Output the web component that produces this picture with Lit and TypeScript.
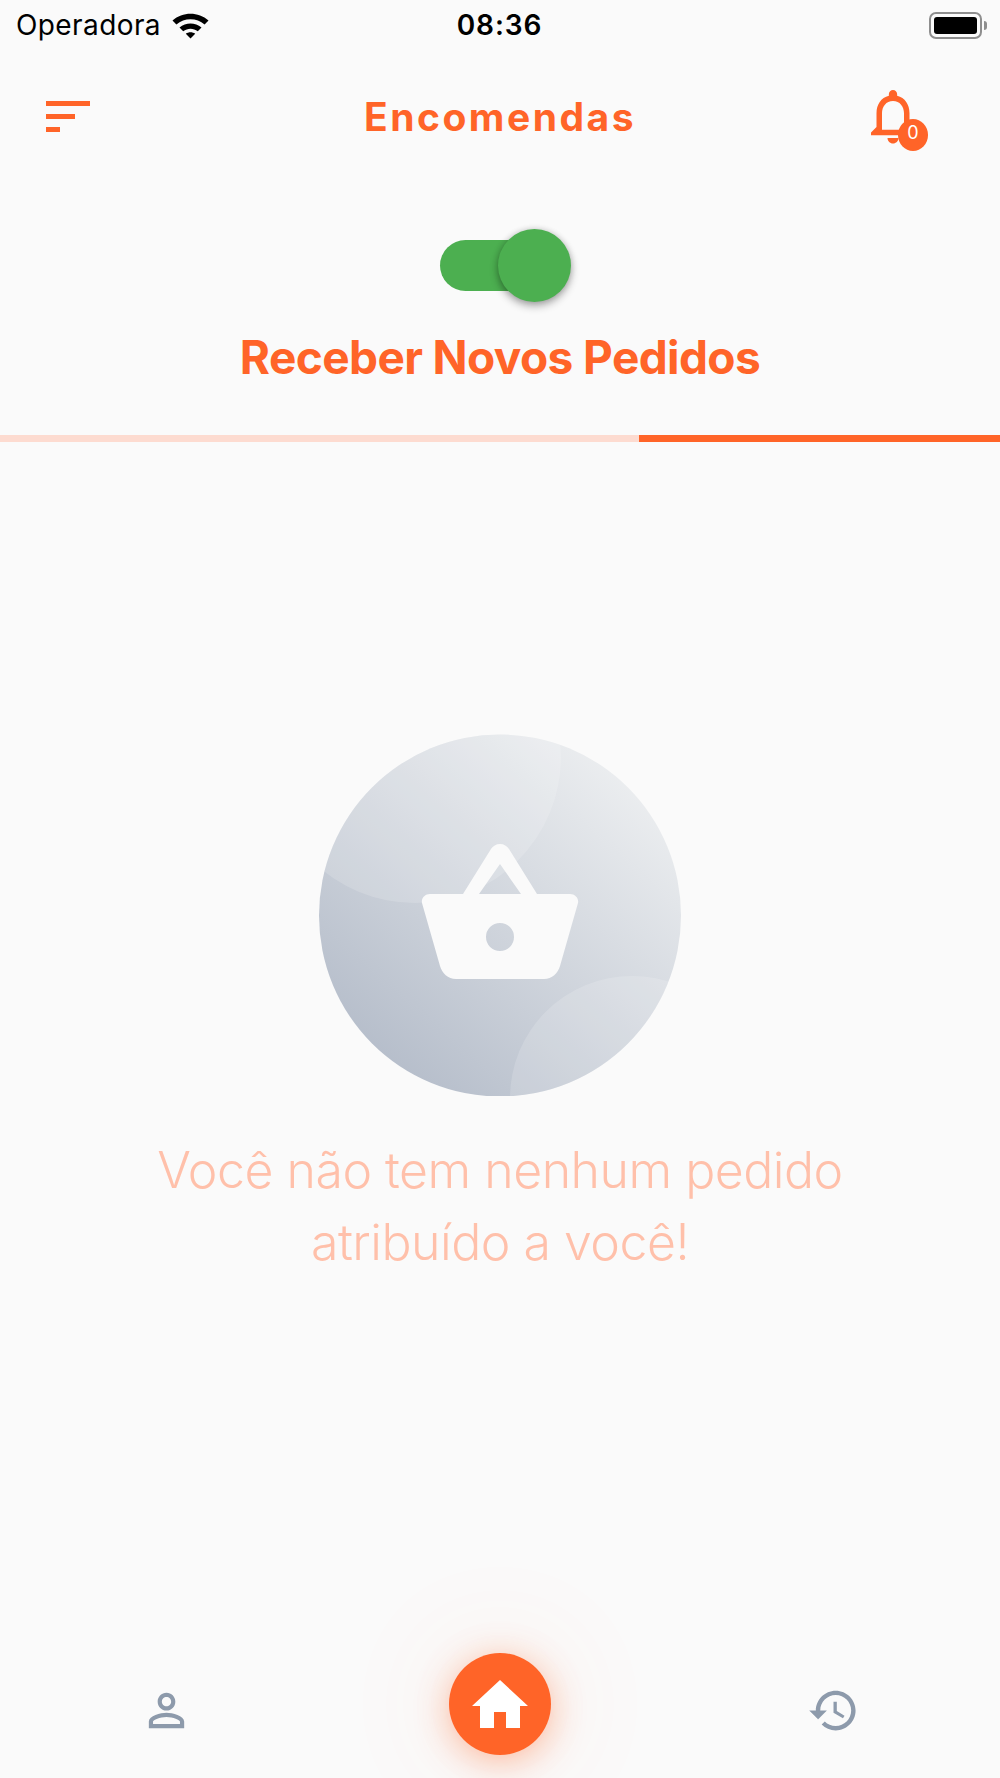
import { LitElement, html, css, svg } from 'lit';
import { customElement, state } from 'lit/decorators.js';

const BASKET =
  'M500 844c4 0 7 2 9 5l28 45h33c5 0 9 4 8 9l-18 63c-2 7-8 13-16 13H456c-8 0-14-6-16-13l-18-63c-1-5 3-9 8-9h33l28-45c2-3 5-5 9-5z' +
  'M500 864l-21 30h42z' +
  'M500 923a14 14 0 1 0 0 28a14 14 0 1 0 0-28z';

const PERSON =
  'M12 5.9c1.16 0 2.1.94 2.1 2.1s-.94 2.1-2.1 2.1S9.9 9.16 9.9 8s.94-2.1 2.1-2.1m0 9c2.97 0 6.1 1.46 6.1 2.1v1.1H5.9V17c0-.64 3.13-2.1 6.1-2.1M12 4C9.79 4 8 5.79 8 8s1.79 4 4 4 4-1.79 4-4-1.79-4-4-4zm0 9c-2.67 0-8 1.34-8 4v3h16v-3c0-2.66-5.33-4-8-4z';
const HISTORY =
  'M13 3c-4.97 0-9 4.03-9 9H1l3.89 3.89.07.14L9 12H6c0-3.87 3.13-7 7-7s7 3.13 7 7-3.13 7-7 7c-1.93 0-3.68-.79-4.94-2.06l-1.42 1.42C8.27 19.99 10.51 21 13 21c4.97 0 9-4.03 9-9s-4.03-9-9-9zm-1 5v5l4.28 2.54.72-1.21-3.5-2.08V8H12z';
const BELL =
  'M12 22c1.1 0 2-.9 2-2h-4c0 1.1.9 2 2 2zm6-6v-5c0-3.07-1.63-5.64-4.5-6.32V4c0-.83-.67-1.5-1.5-1.5s-1.5.67-1.5 1.5v.68C7.64 5.36 6 7.92 6 11v5l-2 2v1h16v-1l-2-2zm-2 1H8v-6c0-2.48 1.51-4.5 4-4.5s4 2.02 4 4.5v6z';

@customElement('app-root')
export class AppRoot extends LitElement {
  static styles = css`
    :host {
      display: block;
      --orange: #ff6428;
      font-family: Inter, 'Noto Sans', sans-serif;
    }

    .page {
      display: flex;
      flex-direction: column;
      height: 1778px;
      background: #fafafa;
      overflow: hidden;
    }

    /* status bar */
    .status {
      display: grid;
      grid-template-columns: 1fr auto 1fr;
      align-items: center;
      height: 50px;
      padding: 0 13px 0 16px;
      font-size: 28px;
      color: #000;
    }
    .status-left {
      display: flex;
      align-items: center;
      gap: 11px;
      letter-spacing: 0.4px;
    }
    .time {
      margin-right: 4px;
      font-weight: 600;
      letter-spacing: 0.9px;
    }
    .battery {
      justify-self: end;
      display: flex;
      align-items: center;
      gap: 2px;
    }
    .battery-body {
      width: 53px;
      height: 27px;
      box-sizing: border-box;
      padding: 3px;
      border: 2px solid #8e8e8e;
      border-radius: 7px;
    }
    .battery-fill {
      height: 100%;
      background: #000;
      border-radius: 3px;
    }
    .battery-nub {
      width: 3px;
      height: 9px;
      background: #8e8e8e;
      border-radius: 0 3px 3px 0;
    }

    /* header */
    .header {
      display: grid;
      grid-template-columns: 1fr auto 1fr;
      align-items: center;
      height: 132px;
      color: var(--orange);
    }
    .menu {
      display: flex;
      flex-direction: column;
      gap: 8px;
      margin-left: 46px;
    }
    .menu span {
      height: 5px;
      background: var(--orange);
    }
    .menu span:nth-child(1) {
      width: 44px;
    }
    .menu span:nth-child(2) {
      width: 29px;
    }
    .menu span:nth-child(3) {
      width: 14px;
    }
    .title {
      font-size: 39px;
      font-weight: 700;
      letter-spacing: 2.5px;
    }
    .bell {
      position: relative;
      justify-self: end;
      width: 66px;
      height: 66px;
      margin-right: 74px;
    }
    .bell svg {
      display: block;
      fill: var(--orange);
    }
    .badge {
      position: absolute;
      left: 38px;
      top: 36px;
      width: 30px;
      height: 32px;
      display: flex;
      align-items: center;
      justify-content: center;
      padding-bottom: 6px;
      box-sizing: border-box;
      border-radius: 50%;
      background: var(--orange);
      color: #fff;
      font-size: 18px;
      font-weight: 400;
    }

    /* toggle */
    .toggle-block {
      display: flex;
      flex-direction: column;
      align-items: center;
      padding-top: 47px;
    }
    .switch {
      position: relative;
      width: 110px;
      height: 51px;
      margin: 11px 0 11px -10px;
      border-radius: 26px;
      background: #4caf50;
    }
    .knob {
      position: absolute;
      top: -11px;
      right: -21px;
      width: 73px;
      height: 73px;
      border-radius: 50%;
      background: #4caf50;
      box-shadow: 0 4px 8px rgba(0, 0, 0, 0.32), 0 0 6px rgba(0, 0, 0, 0.14);
    }
    .label {
      margin-top: 21px;
      font-size: 46px;
      line-height: 68px;
      font-weight: 700;
      letter-spacing: -0.6px;
      color: var(--orange);
    }

    .progress {
      display: flex;
      height: 7px;
      margin-top: 44px;
      background: #fddbd0;
    }
    .progress div {
      margin-left: auto;
      background: var(--orange);
    }

    /* empty state */
    .empty {
      flex: 1;
      display: flex;
      flex-direction: column;
      align-items: center;
      padding-top: 292px;
    }
    .disc {
      display: block;
    }
    .message {
      margin-top: 38px;
      text-align: center;
      font-size: 50px;
      line-height: 72px;
      font-weight: 300;
      letter-spacing: -0.5px;
      color: #ffc0aa;
    }

    /* bottom nav */
    .nav {
      display: grid;
      grid-template-columns: repeat(3, 1fr);
      align-items: center;
      justify-items: center;
      height: 136px;
    }
    .nav svg {
      display: block;
    }
    .nav-icon {
      fill: #8d9aab;
    }
    .home {
      width: 102px;
      height: 102px;
      margin-bottom: 12px;
      border-radius: 50%;
      background: var(--orange);
      display: flex;
      align-items: center;
      justify-content: center;
      box-shadow: 0 6px 34px rgba(255, 100, 40, 0.42), 0 0 110px 24px rgba(255, 100, 40, 0.05);
    }
  `;

  @state() private _progress = 36.1;

  private _wifi() {
    return html`<svg width="37" height="28" viewBox="0 0 37 28">
      <path d="M0.5 9.5C10.5 0.5 26.5 0.5 36.5 9.5L32.6 13.6C24.6 6.6 12.4 6.6 4.4 13.6z"></path>
      <path d="M7.5 16.5C13.8 11.2 23.2 11.2 29.5 16.5L25.8 20.3C21.4 16.9 15.6 16.9 11.2 20.3z"></path>
      <path d="M13.8 22.7C16.6 20.7 20.4 20.7 23.2 22.7L18.5 27.5z"></path>
    </svg>`;
  }

  private _disc() {
    // drawn in page coordinates, the viewBox is the disc's own square
    return html`<svg class="disc" width="362" height="362" viewBox="319 734 362 362">
      <defs>
        <linearGradient id="discFill" x1="0.15" y1="0.9" x2="0.85" y2="0.1">
          <stop offset="0" stop-color="#b5bdca"></stop>
          <stop offset="1" stop-color="#eceef0"></stop>
        </linearGradient>
        <clipPath id="discClip"><circle cx="500" cy="915.5" r="181"></circle></clipPath>
      </defs>
      <circle cx="500" cy="915.5" r="181" fill="url(#discFill)"></circle>
      <g clip-path="url(#discClip)" fill="#fff" fill-opacity="0.16">
        ${svg`<circle cx="415" cy="757" r="146"></circle>`}
        ${svg`<circle cx="632" cy="1098" r="122"></circle>`}
      </g>
      <path d=${BASKET} fill="#fafafa" fill-rule="evenodd"></path>
    </svg>`;
  }

  render() {
    return html`
      <div class="page">
        <div class="status">
          <div class="status-left"><span>Operadora</span>${this._wifi()}</div>
          <div class="time">08:36</div>
          <div class="battery">
            <div class="battery-body"><div class="battery-fill"></div></div>
            <div class="battery-nub"></div>
          </div>
        </div>

        <div class="header">
          <div class="menu"><span></span><span></span><span></span></div>
          <div class="title">Encomendas</div>
          <div class="bell">
            <svg width="66" height="66" viewBox="0 0 24 24"><path d=${BELL}></path></svg>
            <div class="badge">0</div>
          </div>
        </div>

        <div class="toggle-block">
          <div class="switch"><div class="knob"></div></div>
          <div class="label">Receber Novos Pedidos</div>
        </div>

        <div class="progress">
          <div style="width: ${this._progress}%"></div>
        </div>

        <div class="empty">
          ${this._disc()}
          <div class="message">Você não tem nenhum pedido<br />atribuído a você!</div>
        </div>

        <div class="nav">
          <svg class="nav-icon" width="53" height="53" viewBox="0 0 24 24"><path d=${PERSON}></path></svg>
          <div class="home">
            <svg width="56" height="48" viewBox="0 0 56 48" fill="#fff">
              <path d="M28 0L56 26H48V48H34V32H22V48H8V26H0z"></path>
            </svg>
          </div>
          <svg class="nav-icon" width="53" height="53" viewBox="0 0 24 24"><path d=${HISTORY}></path></svg>
        </div>
      </div>
    `;
  }
}

declare global {
  interface HTMLElementTagNameMap {
    'app-root': AppRoot;
  }
}
